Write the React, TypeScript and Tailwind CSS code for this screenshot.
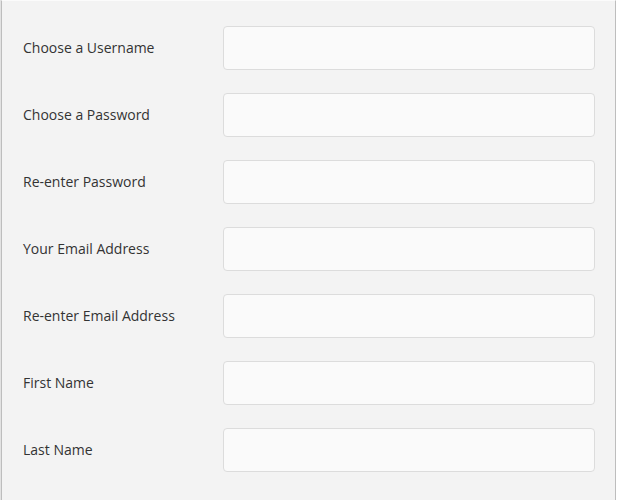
const fields = [
  "Choose a Username",
  "Choose a Password",
  "Re-enter Password",
  "Your Email Address",
  "Re-enter Email Address",
  "First Name",
  "Last Name",
];

export default function App() {
  return (
    <div className="w-[617px] h-[500px] bg-white">
      <div className="h-full w-[616px] border-l border-[#e2e2e2]">
        <div
          className="h-full border-l border-r border-t border-[#bdbdbd] border-t-[#fbfbfb] bg-[#f3f3f3] pl-[21px] pt-[25px] flex flex-col gap-[23px] text-[#333333] text-[14px]"
          style={{ fontFamily: '"Open Sans", "DejaVu Sans", sans-serif' }}
        >
          {fields.map((label) => (
            <div key={label} className="flex items-center">
              <label className="w-[200px] shrink-0 leading-none">{label}</label>
              <input
                type="text"
                className="w-[372px] h-[44px] rounded-[4px] border border-[#dcdcdc] bg-[#fafafa] outline-none"
              />
            </div>
          ))}
        </div>
      </div>
    </div>
  );
}
